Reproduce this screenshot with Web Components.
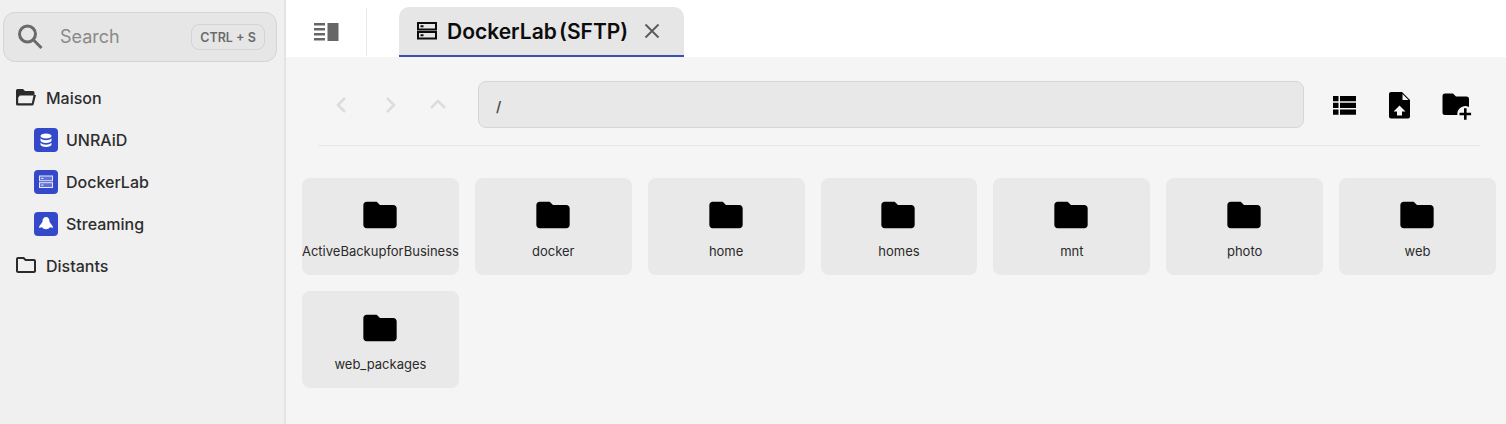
<!DOCTYPE html>
<html>
<head>
<meta charset="utf-8">
<title>Files</title>
<style>
  html, body { margin: 0; padding: 0; height: 100%; }
  body { font-family: Inter, "Liberation Sans", sans-serif; overflow: hidden; }
</style>
</head>
<body>
<app-shell>
  <side-bar slot="side">
    <search-box></search-box>
    <tree-item icon="folder-open">Maison</tree-item>
    <tree-item icon="database" nested>UNRAiD</tree-item>
    <tree-item icon="server" nested>DockerLab</tree-item>
    <tree-item icon="tux" nested>Streaming</tree-item>
    <tree-item icon="folder">Distants</tree-item>
  </side-bar>
  <tab-bar slot="top">DockerLab (SFTP)</tab-bar>
  <path-bar slot="main" path="/"></path-bar>
  <file-grid slot="main">
    <file-card>ActiveBackupforBusiness</file-card>
    <file-card>docker</file-card>
    <file-card>home</file-card>
    <file-card>homes</file-card>
    <file-card>mnt</file-card>
    <file-card>photo</file-card>
    <file-card>web</file-card>
    <file-card>web_packages</file-card>
  </file-grid>
</app-shell>

<script>
const FOLDER = 'M10 4H4c-1.1 0-1.99.9-1.99 2L2 18c0 1.1.9 2 2 2h16c1.1 0 2-.9 2-2V8c0-1.1-.9-2-2-2h-8l-2-2z';

const treeIcons = {
  'folder-open': `<svg width="24" height="24" viewBox="0 0 24 24" fill="#2b2b2b"><path fill-rule="evenodd" d="M4.500 3H10l2 2h8a1.500 1.500 0 0 1 1.500 1.500V9H23l-2.400 9.500a1.500 1.500 0 0 1-1.500 1H4.500A1.500 1.500 0 0 1 3 18V4.500A1.500 1.500 0 0 1 4.500 3zM7 9.500h13.500l-1.700 7.800H5.200L5.200 11.500z"/></svg>`,
  'folder': `<svg width="24" height="24" viewBox="0 0 24 24" fill="#2b2b2b"><path transform="translate(1 -1)" d="M9.170 6l2 2H20v10H4V6h5.170M10 4H4c-1.100 0-1.990.9-1.990 2L2 18c0 1.100.9 2 2 2h16c1.100 0 2-.9 2-2V8c0-1.100-.9-2-2-2h-8l-2-2z"/></svg>`,
  'database': `<svg width="24" height="24" viewBox="0 0 24 24" fill="#fff"><ellipse cx="12" cy="8" rx="5.500" ry="2.600"/><path d="M6.500 10.200c1 1.300 3.200 2 5.500 2s4.500-.7 5.500-2v2.300c0 1.400-2.500 2.500-5.500 2.500s-5.500-1.100-5.500-2.500z"/><path d="M6.500 14.700c1 1.300 3.200 2 5.500 2s4.500-.7 5.500-2v1.800c0 1.500-2.500 2.500-5.500 2.500s-5.500-1-5.500-2.500z"/></svg>`,
  'server': `<svg width="24" height="24" viewBox="0 0 24 24" fill="none" stroke="#e6e9fa" stroke-width="1"><rect x="5.500" y="6" width="13" height="4.800" fill="#5f70d8"/><rect x="5.500" y="12.700" width="13" height="4.800" fill="#5f70d8"/><path d="M7 8.400h2.500M7 15.100h2.500"/></svg>`,
  'tux': `<svg width="24" height="24" viewBox="0 0 24 24" fill="#fff"><path d="M12 5c-2.200 0-3.400 1.800-3.400 3.800 0 1.300-.8 2.200-1.800 3.400-.8 1-1.700 2-1.800 3 0 .5.4.6.9.5l2.100-.5c.8 1.300 2.300 2 4 2s3.200-.7 4-2l2.100.5c.5.1.9 0 .9-.5-.1-1-1-2-1.800-3-1-1.200-1.800-2.100-1.800-3.400C15.400 6.800 14.200 5 12 5z"/></svg>`
};

class AppShell extends HTMLElement {
  constructor() {
    super();
    this.attachShadow({ mode: 'open' });
    this.shadowRoot.innerHTML = `
<style>
  :host { display: grid; grid-template-columns: 286px 1fr; height: 424px; width: 1506px; }
  .side { background: #f0f0f0; border-right: 2px solid #e4e4e4; box-sizing: border-box; }
  .right { display: flex; flex-direction: column; min-width: 0; }
  .main { flex: 1; background: #f5f5f5; }
</style>
<div class="side"><slot name="side"></slot></div>
<div class="right">
  <slot name="top"></slot>
  <div class="main"><slot name="main"></slot></div>
</div>`;
  }
}

class SideBar extends HTMLElement {
  constructor() {
    super();
    this.attachShadow({ mode: 'open' });
    this.shadowRoot.innerHTML = `
<style>
  :host { display: block; padding: 12px 0 0 3px; }
</style>
<slot></slot>`;
  }
}

class SearchBox extends HTMLElement {
  constructor() {
    super();
    this.attachShadow({ mode: 'open' });
    this.shadowRoot.innerHTML = `
<style>
  :host { display: flex; align-items: center; box-sizing: border-box; width: 274px; height: 50px; margin-bottom: 15px;
    background: #e6e6e6; border: 1px solid #d4d4d4; border-radius: 12px; padding: 0 11px 0 11px; }
  svg { flex: none; }
  .ph { flex: 1; margin-left: 15px; font-size: 18px; line-height: 22px; color: #8a8a8a; }
  kbd { font: 600 12.500px Inter, "Liberation Sans", sans-serif; color: #6b6b6b; border: 1px solid #d4d4d4; border-radius: 8px;
    height: 24px; width: 72px; display: flex; align-items: center; justify-content: center; }
</style>
<svg width="30" height="30" viewBox="0 0 30 30" fill="none" stroke="#6a6a6a" stroke-width="3"><circle cx="12.500" cy="12" r="8"/><path d="M18.500 18l8 8"/></svg>
<span class="ph">Search</span>
<kbd>CTRL + S</kbd>`;
  }
}

class TreeItem extends HTMLElement {
  constructor() {
    super();
    this.attachShadow({ mode: 'open' });
  }
  connectedCallback() {
    const name = this.getAttribute('icon');
    const nested = this.hasAttribute('nested');
    this.shadowRoot.innerHTML = `
<style>
  :host { display: flex; align-items: center; height: 42px; font-size: 16px; font-weight: 500; color: #2d2d2d;
    padding-left: ${nested ? 31 : 10}px; }
  .icon { width: 24px; height: 24px; flex: none; display: flex; margin-right: ${nested ? 8 : 9}px; }
  .blue { background: #3349c9; border-radius: 4px; }
</style>
<span class="icon ${nested ? 'blue' : ''}">${treeIcons[name]}</span>
<slot></slot>`;
  }
}

class TabBar extends HTMLElement {
  constructor() {
    super();
    this.attachShadow({ mode: 'open' });
    this.shadowRoot.innerHTML = `
<style>
  :host { display: flex; height: 57px; background: #fff; box-sizing: border-box; }
  .toggle { width: 81px; height: 48px; margin-top: 8px; box-sizing: border-box; padding-left: 2px; display: flex; align-items: center; justify-content: center; border-right: 1px solid #e8e8e8; }
  .tab { margin: 7px 0 0 32px; width: 285px; box-sizing: border-box; height: 50px; background: #e6e6e6; border-radius: 10px 10px 0 0;
    border-bottom: 2px solid #3a4fb0; display: flex; align-items: center; padding-left: 17px; font-size: 21px; font-weight: 600; color: #0c0c0c; word-spacing: -3px; }
  .tab svg { flex: none; }
  .label { margin-left: 9px; white-space: nowrap; }
  .close { margin-left: 16px; display: flex; }
</style>
<div class="toggle">
  <svg width="26" height="20" viewBox="0 0 26 20" fill="#666"><path d="M0 1h11v2.500H0zM0 6h11v2.500H0zM0 11h11v2.500H0zM0 16h11v2.500H0z"/><rect x="13.500" y="1" width="11" height="18"/></svg>
</div>
<div class="tab">
  <svg width="22" height="20" viewBox="0 0 22 20" fill="none" stroke="#0c0c0c" stroke-width="2"><rect x="2" y="2" width="18" height="6.500"/><rect x="2" y="11" width="18" height="6.500"/><path d="M4.500 5.200h3M4.500 14.200h3"/></svg>
  <span class="label"><slot></slot></span>
  <span class="close"><svg width="16" height="16" viewBox="0 0 16 16" stroke="#5a5a5a" stroke-width="1.800" fill="none"><path d="M1.500 1.500l13 13M14.500 1.500l-13 13"/></svg></span>
</div>`;
  }
}

class PathBar extends HTMLElement {
  constructor() {
    super();
    this.attachShadow({ mode: 'open' });
  }
  connectedCallback() {
    this.shadowRoot.innerHTML = `
<style>
  :host { display: block; box-sizing: border-box; margin: 0 26px 0 32px; padding: 24px 0 17px; border-bottom: 1px solid #e6e6e6; }
  .row { display: flex; align-items: center; height: 47px; }
  .nav { display: flex; width: 160px; flex: none; padding-left: 14px; box-sizing: border-box; gap: 28px; }
  .path { flex: 1; box-sizing: border-box; height: 47px; background: #e8e8e8; border: 1px solid #d6d6d6; border-radius: 8px;
    display: flex; align-items: center; padding: 3px 0 0 17px; font: 600 14px Inter, "Liberation Sans", sans-serif; color: #505050; }
  .tools { width: 176px; flex: none; display: flex; align-items: center; box-sizing: border-box; padding-left: 29px; }
  .tools svg { display: block; flex: none; }
</style>
<div class="row">
  <div class="nav">
    <svg width="20" height="20" viewBox="0 0 20 20" fill="none" stroke="#dcdcdc" stroke-width="2.500"><path d="M13 3l-7 7 7 7"/></svg>
    <svg width="20" height="20" viewBox="0 0 20 20" fill="none" stroke="#dcdcdc" stroke-width="2.500"><path d="M7 3l7 7-7 7"/></svg>
    <svg width="20" height="20" viewBox="0 0 20 20" fill="none" stroke="#dcdcdc" stroke-width="2.500"><path d="M3 13l7-7 7 7"/></svg>
  </div>
  <div class="path">${this.getAttribute('path')}</div>
  <div class="tools">
    <svg width="23" height="24" viewBox="0 0 23 24"><path d="M0 3h5.500v5.300H0zM7 3h16v5.300H7zM0 9.700h5.500V15H0zM7 9.700h16V15H7zM0 16.400h5.500v5.300H0zM7 16.400h16v5.300H7z"/></svg>
    <svg style="margin-left:31px" width="24" height="28" viewBox="0 0 24 28"><path fill-rule="evenodd" d="M4 1h11l8 8v16.500a2 2 0 0 1-2 2H4a2 2 0 0 1-2-2V3a2 2 0 0 1 2-2zM15.500 3v6h6zM12.500 14.500l-6 6H10v4h5v-4h3.500z"/></svg>
    <svg style="margin-left:31px" width="30" height="31" viewBox="0 0 30 31"><path d="M3 4.500h8l3 3h10.500A2.500 2.500 0 0 1 27 10v7.900A8 8 0 0 0 15.400 26H3a2.500 2.500 0 0 1-2.500-2.500V7A2.500 2.500 0 0 1 3 4.500z"/><path d="M22 19.200h2.600v4.500h4.500v2.600h-4.500v4.500H22v-4.500h-4.500v-2.600H22z"/></svg>
  </div>
</div>`;
  }
}

class FileGrid extends HTMLElement {
  constructor() {
    super();
    this.attachShadow({ mode: 'open' });
    this.shadowRoot.innerHTML = `
<style>
  :host { display: grid; grid-template-columns: repeat(7, 156.850px); gap: 16px; padding: 32px 0 0 16px; }
</style>
<slot></slot>`;
  }
}

class FileCard extends HTMLElement {
  constructor() {
    super();
    this.attachShadow({ mode: 'open' });
    this.shadowRoot.innerHTML = `
<style>
  :host { display: flex; flex-direction: column; align-items: center; height: 97px; box-sizing: border-box; padding-top: 17px;
    background: #e9e9e9; border-radius: 8px; font-size: 13px; color: #2a2a2a; }
  svg { flex: none; display: block; margin-right: 1px; }
  .name { margin-top: 7px; line-height: 18px; white-space: nowrap; }
</style>
<svg width="40" height="40" viewBox="0 0 24 24" fill="#000"><path d="${FOLDER}"/></svg>
<span class="name"><slot></slot></span>`;
  }
}

customElements.define('app-shell', AppShell);
customElements.define('side-bar', SideBar);
customElements.define('search-box', SearchBox);
customElements.define('tree-item', TreeItem);
customElements.define('tab-bar', TabBar);
customElements.define('path-bar', PathBar);
customElements.define('file-grid', FileGrid);
customElements.define('file-card', FileCard);
</script>
</body>
</html>
